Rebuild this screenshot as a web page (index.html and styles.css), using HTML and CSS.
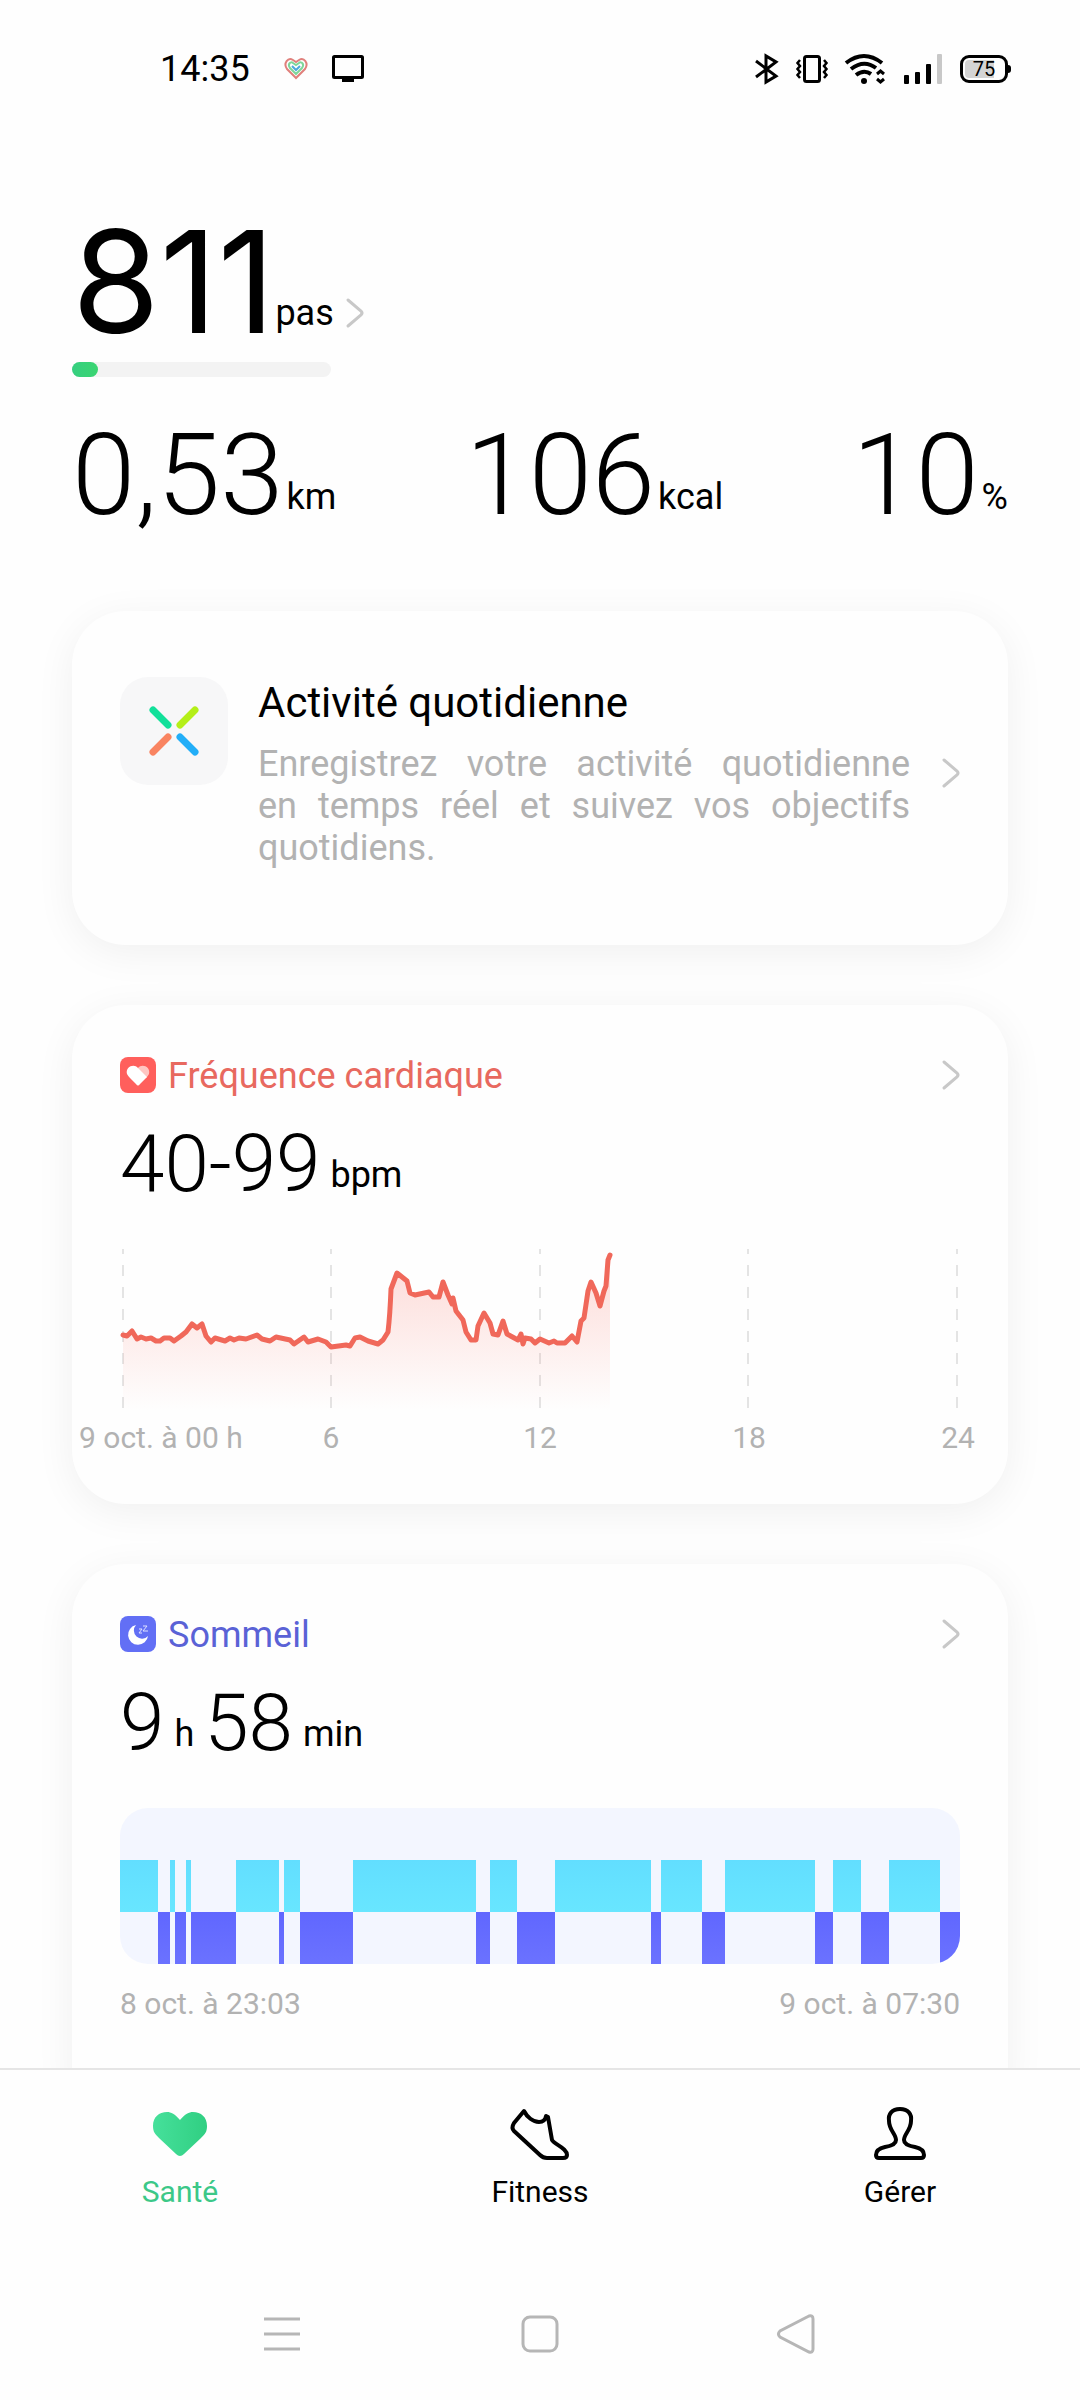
FILE: index.html
```html
<!DOCTYPE html>
<html lang="fr">
<head>
    <meta charset="UTF-8">
    <meta name="viewport" content="width=device-width, initial-scale=1.0">
    <title>Santé</title>
    <link rel="stylesheet" href="styles.css">
</head>
<body>
    <header class="status-bar">
        <div class="status-left">
            <span class="clock">14:35</span>
            <svg class="status-heart" width="24" height="24" viewBox="0 0 24 24" fill="none" stroke-width="2">
                <path d="M12 21L3 12C-1 6 4 0 9 3L12 5L15 3C20 0 25 6 21 12Z" stroke="#e0807c"/>
                <path d="M12 17L6 11C3 7 7 4 9 6L12 8L15 6C17 4 21 7 18 11Z" stroke="#7fd69a"/>
                <path d="M8 9L12 13L16 9" stroke="#4aa8dc"/>
            </svg>
            <svg width="32" height="28" viewBox="0 0 32 28">
                <rect x="1.5" y="1.5" width="29" height="21" rx="1" fill="none" stroke="#000" stroke-width="3"/>
                <path d="M10 23h12v4H10z"/>
            </svg>
        </div>
        <div class="status-right">
            <svg width="24" height="30" viewBox="0 0 24 30" fill="none" stroke="#000" stroke-width="3">
                <path d="M1 7L21 22L11 28V2L21 8L1 23"/>
            </svg>
            <svg width="32" height="30" viewBox="0 0 32 30" fill="none" stroke="#000">
                <rect x="8.500" y="2.500" width="15" height="25" rx="2" stroke-width="3"/>
                <path d="M4 6L1.500 9L4 12L1.500 15L4 18L1.500 21L4 24M28 6L30.500 9L28 12L30.500 15L28 18L30.500 21L28 24" stroke-width="2.500"/>
            </svg>
            <svg width="42" height="30" viewBox="0 0 42 30" fill="none" stroke="#000" stroke-width="4">
                <path d="M1 9Q19 -5 37 9M6 15Q19 5 31 14M11 21Q19 15 26 20"/>
                <circle cx="19" cy="27" r="3" fill="#000" stroke="none"/>
                <path d="M32 20L35.500 17L39 20M32 25L35.500 28L39 25" stroke-width="3"/>
            </svg>
            <svg width="39" height="30" viewBox="0 0 39 30">
                <rect x="0" y="21" width="5" height="9" rx="1"/>
                <rect x="11" y="18" width="5" height="12" rx="1"/>
                <rect x="22" y="10" width="5" height="20" rx="1"/>
                <rect x="33" y="0" width="5" height="30" rx="1" fill="#c8c8c8"/>
            </svg>
            <div class="battery"><span class="battery-level">75</span></div>
        </div>
    </header>

    <main class="content">
        <section class="summary">
            <a class="steps" href="#">
                <span class="steps-value">811</span>
                <span class="unit">pas</span>
                <svg class="chevron" width="20" height="32" viewBox="0 0 20 32"><path d="M4 3L17 14Q19 16 17 18L4 29"/></svg>
            </a>
            <div class="progress" role="progressbar" aria-label="Objectif de pas" aria-valuenow="10" aria-valuemin="0" aria-valuemax="100">
                <div class="progress-fill" style="width: 10%"></div>
            </div>
            <div class="metrics">
                <div class="metric"><span class="metric-value">0,53</span><span class="unit">km</span></div>
                <div class="metric"><span class="metric-value">106</span><span class="unit">kcal</span></div>
                <div class="metric"><span class="metric-value">10</span><span class="unit">%</span></div>
            </div>
        </section>

        <a class="card activity" href="#">
            <span class="activity-icon">
                <svg width="52" height="52" viewBox="0 0 52 52" fill="none" stroke-width="7" stroke-linecap="round">
                    <path d="M5 5L20 20" stroke="#12e09a"/>
                    <path d="M47 5L32 20" stroke="#b4ef18"/>
                    <path d="M20 32L5 47" stroke="#f98461"/>
                    <path d="M32 32L47 47" stroke="#22aef8"/>
                </svg>
            </span>
            <div class="activity-text">
                <h2 class="activity-title">Activité quotidienne</h2>
                <p class="activity-desc">Enregistrez votre activité quotidienne en&nbsp;temps réel et suivez vos objectifs quotidiens.</p>
            </div>
            <svg class="chevron" width="20" height="32" viewBox="0 0 20 32"><path d="M4 3L17 14Q19 16 17 18L4 29"/></svg>
        </a>

        <section class="card heart-card">
            <a class="card-header" href="#">
                <svg width="36" height="36" viewBox="0 0 36 36">
                    <rect width="36" height="36" rx="8" fill="#ff5f5c"/>
                    <path d="M18 11C22 6 31 10 29 17Q28 19 26 21L16 12Z" fill="#ffc6c3"/>
                    <path d="M18 11C14 6 5 10 7 17Q8 19 10 21L16 27Q18 30 20 27L27 20Z" fill="#fff"/>
                </svg>
                <h2 class="card-title">Fréquence cardiaque</h2>
                <svg class="chevron" width="20" height="32" viewBox="0 0 20 32"><path d="M4 3L17 14Q19 16 17 18L4 29"/></svg>
            </a>
            <div class="reading"><span class="reading-value">40-99</span><span class="unit">bpm</span></div>
            <svg class="heart-chart" viewBox="0 0 840 162">
                <defs>
                    <linearGradient id="heart-fill" x1="0" y1="0" x2="0" y2="1">
                        <stop offset="0" stop-color="#f96a5c" stop-opacity="0.240"/>
                        <stop offset="1" stop-color="#f96a5c" stop-opacity="0"/>
                    </linearGradient>
                </defs>
                <path class="grid-lines" d="M3 0V162M211 0V162M420 0V162M628 0V162M837 0V162"/>
                <path fill="url(#heart-fill)" d="M3 162V87L12 83L17 91L36 93L50 90L54 93L61 88L72 76L77 80L82 76L91 94L95 90L137 87L150 93L156 89L170 92L174 96L184 89L188 94L198 91L211 99L230 98L240 89L258 96L268 83L271 40L277 24L287 32L290 44L295 46L309 43L313 48L319 48L323 33L332 55L336 62L343 71L351 92L356 91L358 77L364 64L370 74L378 86L383 72L387 85L398 91L411 90L429 94L445 94L452 87L457 93L461 72L468 42L471 33L480 57L486 37L490 6V162Z"/>
                <path class="heart-line" d="M3 86L7 87L12 82L17 90L21 88L26 90L31 89L36 92L40 92L44 89L50 89L54 92L61 87L66 83L72 75L77 79L82 75L86 87L91 93L95 89L105 92L110 89L114 91L119 89L126 90L137 86L142 90L150 92L156 88L170 91L174 95L184 88L188 93L198 90L206 93L211 98L226 96L230 97L235 89L240 88L248 92L258 95L263 91L268 83Q270 66 271 40L277 24L287 32L290 44L295 46L309 43L313 48L319 48L323 33L328 46L332 55L333 49L336 62L343 71L346 83L351 91L356 91L358 77L364 64L370 74L373 85L378 86L383 72L387 85L398 91L401 85L403 95L405 89L411 90L415 94L420 90L429 94L434 92L437 94L445 94L452 87L457 93L461 72L464 69L468 42L471 33L476 44L480 57L484 42L486 37L488 11L490 6"/>
            </svg>
            <div class="axis">
                <span>9 oct. à 00 h</span>
                <span>6</span>
                <span>12</span>
                <span>18</span>
                <span>24</span>
            </div>
        </section>

        <section class="card sleep-card">
            <a class="card-header" href="#">
                <svg width="36" height="36" viewBox="0 0 36 36">
                    <rect width="36" height="36" rx="8" fill="#626ff5"/>
                    <path d="M16 9A10 10 0 1 0 28 20A8 8 0 0 1 16 9Z" fill="#fff"/>
                    <path d="M23 10H27L23 15H28M19 13H22L19 17H22" fill="none" stroke="#dfe2ff" stroke-width="1"/>
                </svg>
                <h2 class="card-title">Sommeil</h2>
                <svg class="chevron" width="20" height="32" viewBox="0 0 20 32"><path d="M4 3L17 14Q19 16 17 18L4 29"/></svg>
            </a>
            <div class="reading">
                <span class="reading-value">9</span><span class="unit">h</span>
                <span class="reading-value">58</span><span class="unit">min</span>
            </div>
            <svg class="sleep-chart" viewBox="0 0 840 156">
                <defs>
                    <linearGradient id="light-fill" x1="0" y1="0" x2="0" y2="1">
                        <stop offset="0" stop-color="#62deff"/>
                        <stop offset="1" stop-color="#68e6ff"/>
                    </linearGradient>
                    <linearGradient id="deep-fill" x1="0" y1="0" x2="0" y2="1">
                        <stop offset="0" stop-color="#6067ff"/>
                        <stop offset="1" stop-color="#6b72ff"/>
                    </linearGradient>
                </defs>
                <!-- sommeil léger -->
                <path fill="url(#light-fill)" d="M0 52H38V104H0ZM50 52H55V104H50ZM66 52H71V104H66ZM116 52H159V104H116ZM164 52H180V104H164ZM233 52H356V104H233ZM370 52H397V104H370ZM435 52H531V104H435ZM541 52H582V104H541ZM605 52H695V104H605ZM713 52H741V104H713ZM769 52H820V104H769Z"/>
                <!-- sommeil profond -->
                <path fill="url(#deep-fill)" d="M38 104H50V156H38ZM55 104H66V156H55ZM71 104H116V156H71ZM159 104H164V156H159ZM180 104H233V156H180ZM356 104H370V156H356ZM397 104H435V156H397ZM531 104H541V156H531ZM582 104H605V156H582ZM695 104H713V156H695ZM741 104H769V156H741ZM820 104H840V156H820Z"/>
            </svg>
            <div class="sleep-range">
                <span>8 oct. à 23:03</span>
                <span>9 oct. à 07:30</span>
            </div>
        </section>
    </main>

    <nav class="tabs">
        <a class="tab active" href="#">
            <svg width="60" height="60" viewBox="0 0 60 60">
                <defs>
                    <linearGradient id="tab-heart" x1="0" y1="0" x2="1" y2="0">
                        <stop offset="0" stop-color="#46e09b"/>
                        <stop offset="1" stop-color="#30cf82"/>
                    </linearGradient>
                </defs>
                <path fill="url(#tab-heart)" d="M30 16C25 10 21 8 17 8C9 8 3 13 3 22C3 28 5 30 9 34L26 50Q30 54 34 50L51 34C55 30 57 28 57 22C57 13 51 8 43 8C39 8 35 10 30 16Z"/>
            </svg>
            <span>Santé</span>
        </a>
        <a class="tab" href="#">
            <svg class="tab-line" width="60" height="60" viewBox="0 0 60 60">
                <path d="M14 7C17 13 23 18 29 18Q35 18 36 12L38 13L42 36C45 41 57 44 57 51Q57 54 53 54H37Q33 54 30 51L4 27Q1 24 4 19Z"/>
            </svg>
            <span>Fitness</span>
        </a>
        <a class="tab" href="#">
            <svg class="tab-line" width="60" height="60" viewBox="0 0 60 60">
                <path d="M30 5C22 5 18 10 19 17C19 26 26 30 26 36C26 40 21 42 15 43Q6 45 6 51Q6 54 9 54H51Q54 54 54 51Q54 45 45 43C39 42 34 40 34 36C34 30 41 26 41 17C42 10 38 5 30 5Z"/>
            </svg>
            <span>Gérer</span>
        </a>
    </nav>

    <footer class="system-nav">
        <button class="system-button" aria-label="Applications récentes">
            <svg width="40" height="40" viewBox="0 0 40 40"><path d="M2 5H38M2 20H38M2 35H38"/></svg>
        </button>
        <button class="system-button" aria-label="Accueil">
            <svg width="40" height="40" viewBox="0 0 40 40"><rect x="3" y="3" width="34" height="34" rx="7"/></svg>
        </button>
        <button class="system-button" aria-label="Retour">
            <svg width="40" height="40" viewBox="0 0 40 40"><path d="M31 2L2 17Q-1 20 2 23L31 38Q35 39 35 35V5Q35 1 31 2Z"/></svg>
        </button>
    </footer>
</body>
</html>
```

FILE: styles.css
```css
* {
    box-sizing: border-box;
}
body {
    font-family: Roboto, "Noto Sans", sans-serif;
    display: flex;
    flex-direction: column;
    height: 100vh;
    margin: 0;
    background-color: #fefefe;
    color: #000;
}
a {
    color: inherit;
    text-decoration: none;
}
h2, p {
    margin: 0;
    font-weight: 400;
}
svg {
    display: block;
    flex-shrink: 0;
    overflow: visible;
}

/* status bar */
.status-bar {
    display: flex;
    justify-content: space-between;
    align-items: center;
    height: 138px;
    padding: 0 72px 0 160px;
}
.status-left, .status-right {
    display: flex;
    align-items: center;
}
.clock {
    font-size: 36px;
}
.status-heart {
    margin: 0 24px 0 34px;
}
.status-right {
    gap: 17px;
}
.battery {
    position: relative;
    width: 48px;
    height: 28px;
    padding: 2px;
    border: 3px solid #000;
    border-radius: 9px;
}
.battery::after {
    content: "";
    position: absolute;
    top: 7px;
    right: -6px;
    width: 3px;
    height: 8px;
    border-radius: 0 3px 3px 0;
    background: #000;
}
.battery-level {
    display: block;
    height: 18px;
    border-radius: 4px;
    background: linear-gradient(to right, #d4d4d4 75%, transparent 75%);
    font-size: 20px;
    line-height: 18px;
    text-align: center;
}

/* main content */
.content {
    flex: 1;
    min-height: 0;
    overflow: hidden;
    padding: 72px 72px 0;
}
.chevron {
    fill: none;
    stroke: #c8c8c8;
    stroke-width: 3;
    stroke-linecap: round;
}
.unit {
    font-size: 36px;
    line-height: 42px;
}
.steps {
    display: flex;
    align-items: flex-end;
}
.steps-value {
    font-family: Inter, Roboto, sans-serif;
    font-size: 142px;
    line-height: 142px;
}
.steps .unit {
    padding-bottom: 18px;
}
.steps .chevron {
    margin: 0 0 23px 10px;
}
.progress {
    width: 259px;
    height: 15px;
    margin-top: 10px;
    border-radius: 8px;
    background: #f3f3f3;
}
.progress-fill {
    height: 100%;
    border-radius: 8px;
    background: linear-gradient(to right, #36cf80, #3ad571);
}
.metrics {
    display: flex;
    justify-content: space-between;
    margin: 41px 0 79px;
}
.metric {
    display: flex;
    align-items: flex-end;
    gap: 3px;
}
.metric-value {
    font-size: 114px;
    font-weight: 300;
    line-height: 114px;
}
.metric .unit {
    padding-bottom: 14px;
}

/* cards */
.card {
    display: block;
    margin-bottom: 60px;
    padding: 51px 48px 48px;
    border-radius: 54px;
    background: #fefefe;
    box-shadow: 0 8px 40px rgba(0,0,0,0.06);
}
.card-header {
    display: flex;
    align-items: center;
    gap: 12px;
}
.card-title {
    flex: 1;
    padding-top: 2px;
    font-size: 36px;
    line-height: 36px;
}
.heart-card .card-title {
    color: #e8695f;
}
.sleep-card {
    padding-bottom: 100px;
}
.sleep-card .card-title {
    color: #5a62d6;
}
.activity {
    display: flex;
    padding: 66px 48px 76px;
}
.activity-icon {
    display: flex;
    align-items: center;
    justify-content: center;
    width: 108px;
    height: 108px;
    border-radius: 28px;
    background: #f7f7f8;
}
.activity-text {
    flex: 1;
    margin: 0 30px;
}
.activity-title {
    font-size: 42px;
    line-height: 52px;
}
.activity-desc {
    margin-top: 14px;
    color: #b2b2b2;
    font-size: 36px;
    line-height: 42px;
    text-align: justify;
}
.activity .chevron {
    align-self: center;
}
.reading {
    display: flex;
    align-items: flex-end;
    gap: 10px;
    margin-top: 30px;
}
.reading-value {
    font-size: 80px;
    font-weight: 300;
    line-height: 80px;
}
.reading .unit {
    padding-bottom: 8px;
}

/* heart rate chart */
.heart-chart {
    width: 100%;
    margin-top: 45px;
}
.grid-lines {
    fill: none;
    stroke: #e4e4e4;
    stroke-width: 2;
    stroke-dasharray: 11 11;
    stroke-dashoffset: 6;
}
.heart-line {
    fill: none;
    stroke: #f0685a;
    stroke-width: 5;
    stroke-linecap: round;
    stroke-linejoin: round;
}
.axis {
    display: flex;
    justify-content: space-between;
    margin: 9px -41px 0;
    color: #b2b2b2;
    font-size: 30px;
    line-height: 36px;
}
.axis span {
    width: 86px;
    text-align: center;
    white-space: nowrap;
}

/* sleep chart */
.sleep-chart {
    width: 100%;
    margin-top: 45px;
    border-radius: 28px;
    background: #f3f6ff;
    overflow: hidden;
}
.sleep-range {
    display: flex;
    justify-content: space-between;
    margin-top: 22px;
    color: #b2b2b2;
    font-size: 30px;
    line-height: 36px;
}

/* bottom tabs */
.tabs {
    position: relative;
    display: flex;
    border-top: 2px solid #e5e5e5;
    padding-top: 34px;
    background: #fefefe;
}
.tab {
    display: flex;
    flex: 1;
    flex-direction: column;
    align-items: center;
    gap: 10px;
    font-size: 30px;
    line-height: 36px;
}
.tab.active {
    color: #3cc888;
}
.tab-line {
    fill: none;
    stroke: #000;
    stroke-width: 4;
    stroke-linejoin: round;
}

/* system buttons */
.system-nav {
    display: flex;
    justify-content: center;
    gap: 218px;
    padding: 104px 0 46px;
    background: #fefefe;
}
.system-button {
    display: block;
    padding: 0;
    border: none;
    background: none;
}
.system-button svg {
    fill: none;
    stroke: #b6b6b6;
    stroke-width: 3;
}
```
